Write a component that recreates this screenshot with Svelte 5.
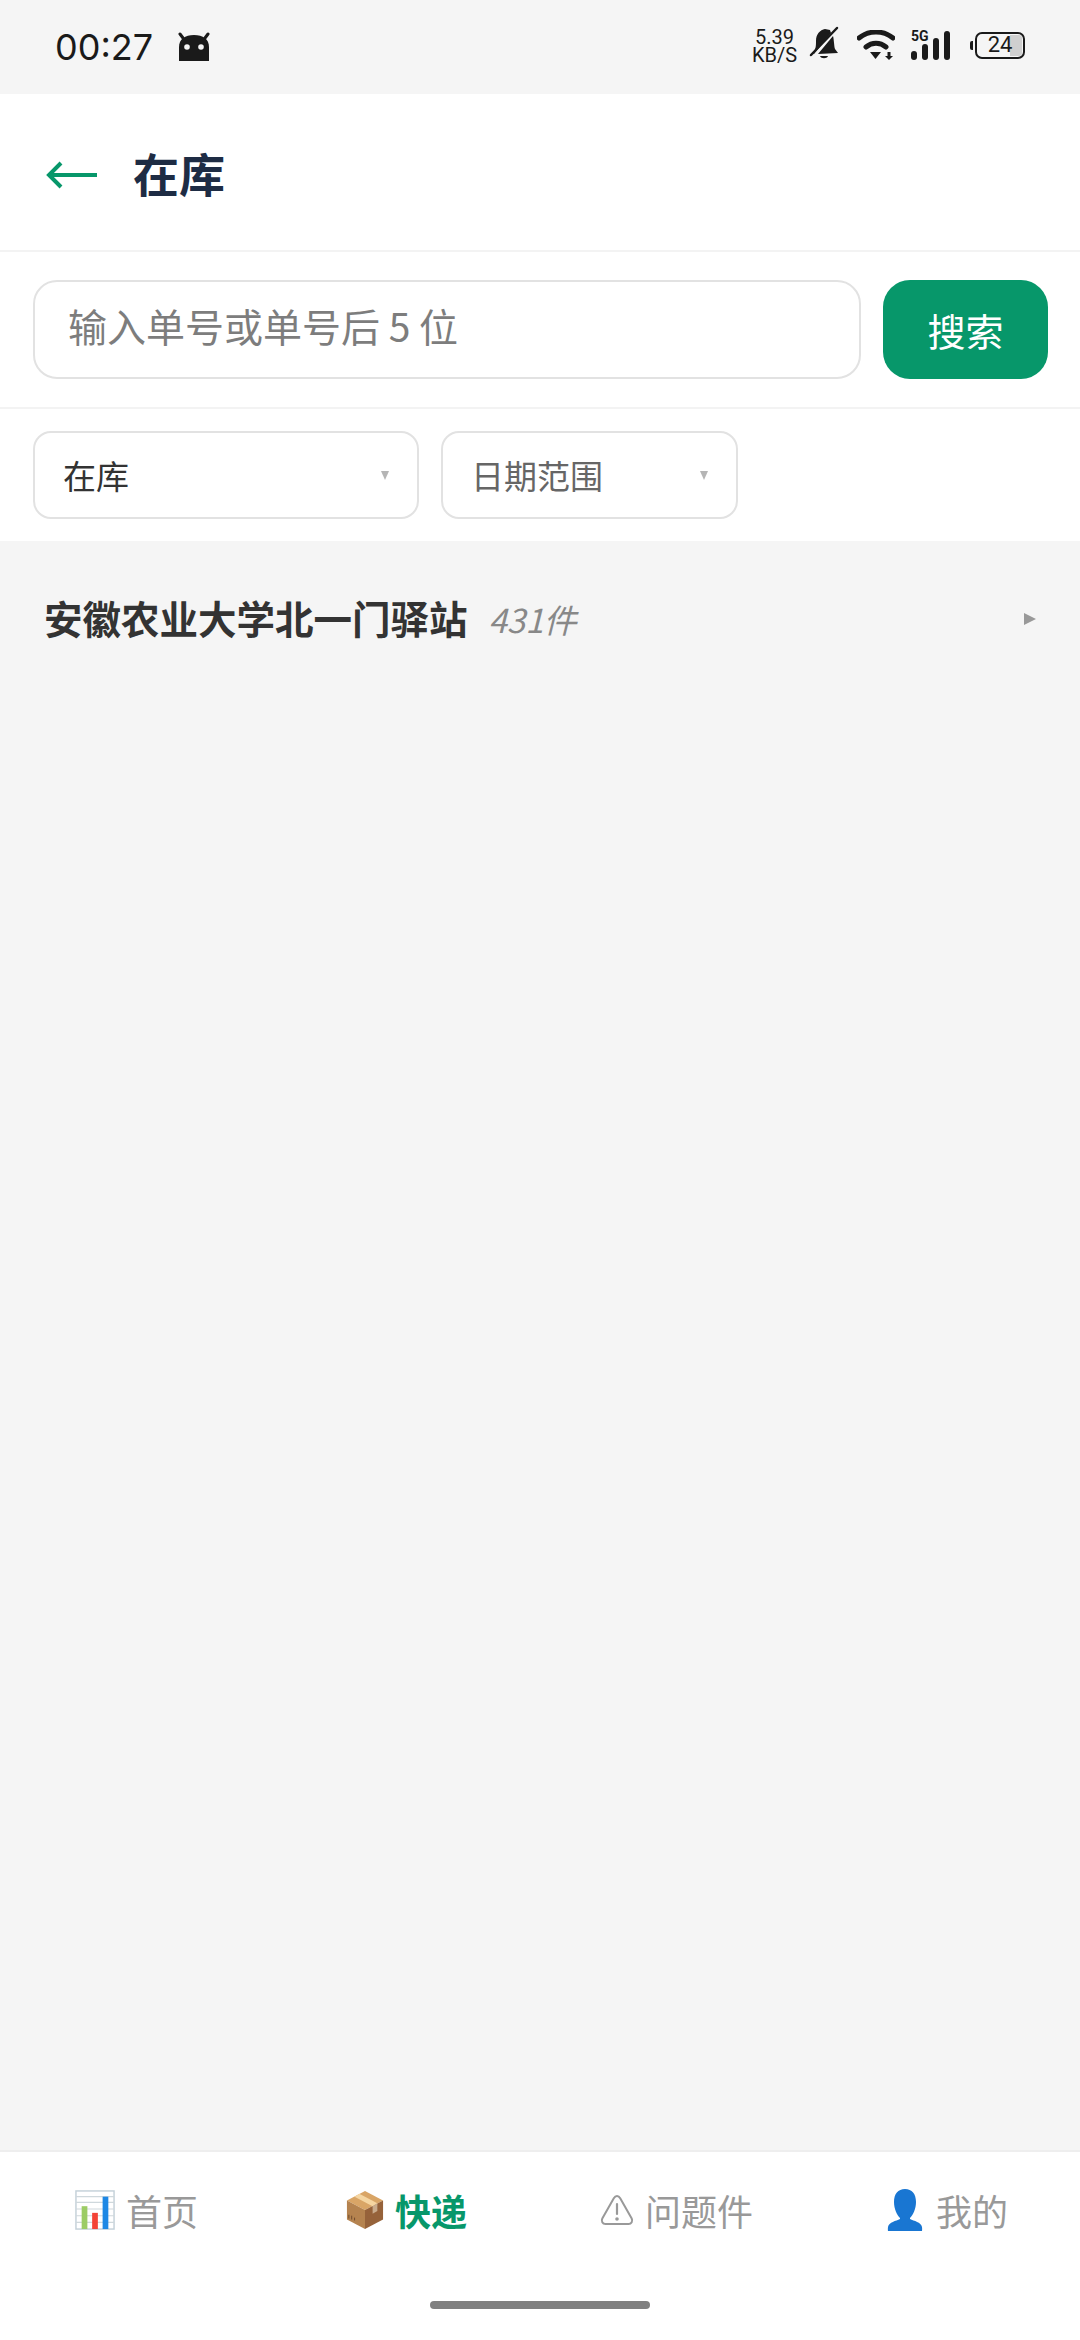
<script>
  let keyword = '';
  const filters = [
    { label: '在库', width: 386, active: true },
    { label: '日期范围', width: 297, active: false }
  ];
</script>

<div class="page">
  <div class="statusbar">
    <div class="status-left">
      <span class="time">00:27</span>
      <svg class="robot" width="32" height="30" viewBox="0 0 32 30">
        <path d="M1 29V15C1 7 7 3 16 3s15 4 15 12v14z" fill="#1a1a1a"/>
        <path d="M5 6L2 2M27 6l3-4" stroke="#1a1a1a" stroke-width="3" stroke-linecap="round"/>
        <circle cx="9" cy="15" r="2.800" fill="#f5f5f5"/>
        <circle cx="23" cy="15" r="2.800" fill="#f5f5f5"/>
      </svg>
    </div>
    <div class="status-right">
      <div class="speed"><span>5.39</span><span>KB/S</span></div>
      <svg class="bell" width="30" height="34" viewBox="0 0 30 34">
        <path d="M3 27C7 24 7 20 7 15 7 8 11 4 16 3l5 1 1 3L5 28z" fill="#1a1a1a"/>
        <path d="M24 10c1 3 1 10 2 13l3 4-20 1z" fill="#1a1a1a"/>
        <path d="M11 30h8c-1 3-7 3-8 0z" fill="#1a1a1a"/>
        <path d="M2 29L28 2" stroke="#1a1a1a" stroke-width="2.500" stroke-linecap="round"/>
      </svg>
      <svg class="wifi" width="38" height="30" viewBox="0 0 38 30">
        <path d="M2 8C12 0 26 0 36 8M9 17c6-5 14-5 20 0" fill="none" stroke="#1a1a1a" stroke-width="5" stroke-linecap="round"/>
        <path d="M13 22h11l-5.500 7z" fill="#1a1a1a"/>
        <path d="M32 22v5" stroke="#1a1a1a" stroke-width="3"/>
        <path d="M28 26h8l-4 4z" fill="#1a1a1a"/>
      </svg>
      <div class="signal">
        <span class="fiveg">5G</span>
        <svg width="40" height="30" viewBox="0 0 40 30">
          <rect x="0" y="21" width="6" height="9" rx="3" fill="#1a1a1a"/>
          <rect x="11" y="14" width="6" height="16" rx="3" fill="#1a1a1a"/>
          <rect x="22" y="8" width="6" height="22" rx="3" fill="#1a1a1a"/>
          <rect x="33" y="1" width="6" height="29" rx="3" fill="#1a1a1a"/>
        </svg>
      </div>
      <div class="battery">
        <span class="nub"></span>
        <div class="cell"><span class="fill"></span><span class="level">24</span></div>
      </div>
    </div>
  </div>

  <header class="header">
    <svg class="back" width="52" height="30" viewBox="0 0 52 30">
      <path d="M51 15H3M15 3L3 15l12 12" fill="none" stroke="#07976a" stroke-width="4"/>
    </svg>
    <h1>在库</h1>
  </header>

  <div class="search">
    <input class="search-input" bind:value={keyword} placeholder="输入单号或单号后 5 位" />
    <button class="search-btn">搜索</button>
  </div>

  <div class="filters">
    {#each filters as f}
      <div class="filter" class:active={f.active} style="width: {f.width}px">
        <span>{f.label}</span>
        <i class="caret"></i>
      </div>
    {/each}
  </div>

  <main class="content">
    <div class="station">
      <span class="name">安徽农业大学北一门驿站</span>
      <span class="count">431件</span>
      <i class="arrow"></i>
    </div>
  </main>

  <nav class="tabbar">
    <div class="tabs">
      <div class="tab">
        <svg width="40" height="40" viewBox="0 0 42 42">
          <rect x="1" y="1" width="40" height="40" fill="#fff" stroke="#c3d0d8" stroke-width="1.500"/>
          <path d="M1 7h40M1 13h40M1 20h40M1 27h40M1 34h40" stroke="#cfd8dc" stroke-width="1.200"/>
          <rect x="7" y="17" width="6" height="24" fill="#9ccc65"/>
          <rect x="18" y="24" width="6" height="17" fill="#f44336"/>
          <rect x="29" y="7" width="6" height="34" fill="#1e88e5"/>
        </svg>
        <span>首页</span>
      </div>
      <div class="tab current">
        <svg width="38" height="40" viewBox="0 0 40 42">
          <path d="M20 1l19 10-19 10L1 11z" fill="#d9a566"/>
          <path d="M1 11l19 10v20L1 31z" fill="#b5834f"/>
          <path d="M39 11L20 21v20l19-10z" fill="#96623a"/>
          <path d="M9 7l19 10 5-3L14 4z" fill="#f5d5a1"/>
          <path d="M28 17l5-3v8l-5 3z" fill="#c9ab8c"/>
          <path d="M3 26v4M6 27v4M9 29v3" stroke="#6d4a2d" stroke-width="1"/>
        </svg>
        <span>快递</span>
      </div>
      <div class="tab">
        <svg width="34" height="32" viewBox="0 0 34 32">
          <path d="M17 2c-1.500 0-2.500 1-3.200 2.200L2.300 24.500C1 27 2.500 30 5.500 30h23c3 0 4.500-3 3.200-5.500L20.200 4.200C19.500 3 18.500 2 17 2z" fill="none" stroke="#999" stroke-width="2"/>
          <path d="M17 10v10" stroke="#999" stroke-width="2.200" stroke-linecap="round"/>
          <circle cx="17" cy="25" r="1.800" fill="#999"/>
        </svg>
        <span>问题件</span>
      </div>
      <div class="tab">
        <svg width="40" height="42" viewBox="0 0 36 42">
          <path d="M18 0c7 0 11 5 11 13 0 7-3 13-6 16v1c4 2 11 3 12 8 .300 2 0 4 0 4H1s-.300-2 0-4c1-5 8-6 12-8v-1C10 26 7 20 7 13 7 5 11 0 18 0z" fill="#1976d2"/>
        </svg>
        <span>我的</span>
      </div>
    </div>
    <div class="home-bar"></div>
  </nav>
</div>

<style>
  :global(body) {
    margin: 0;
    background: #f5f5f5;
  }

  .page {
    width: 1080px;
    height: 2340px;
    display: flex;
    flex-direction: column;
    background: #f5f5f5;
    font-family: "Noto Sans CJK SC", "Noto Sans", sans-serif;
    overflow: hidden;
  }

  /* status bar */
  .statusbar {
    height: 94px;
    flex: none;
    display: flex;
    justify-content: space-between;
    align-items: center;
    padding: 0 55px 4px 55px;
    box-sizing: border-box;
    color: #1a1a1a;
  }

  .status-left {
    display: flex;
    align-items: center;
    gap: 25px;
    margin-top: 3px;
  }

  .time {
    font-family: Inter, Roboto, sans-serif;
    font-size: 36px;
    line-height: 44px;
  }

  .status-right {
    display: flex;
    align-items: center;
  }

  .speed {
    display: flex;
    flex-direction: column;
    align-items: center;
    font-family: Roboto, sans-serif;
    font-size: 20px;
    line-height: 17.500px;
    width: 43px;
    margin-top: 3px;
  }

  .bell {
    margin-left: 13px;
    margin-top: -4px;
  }

  .wifi {
    margin-left: 18px;
  }

  .signal {
    position: relative;
    margin-left: 16px;
    width: 40px;
    height: 30px;
  }

  .fiveg {
    position: absolute;
    left: 0;
    top: 0;
    font-family: Roboto, sans-serif;
    font-size: 14px;
    font-weight: 700;
    line-height: 13px;
  }

  .signal svg {
    display: block;
  }

  .battery {
    display: flex;
    align-items: center;
    margin-left: 19px;
    gap: 2px;
  }

  .nub {
    width: 3px;
    height: 9px;
    border-radius: 2px 0 0 2px;
    background: #1a1a1a;
  }

  .cell {
    position: relative;
    width: 50px;
    height: 27px;
    box-sizing: border-box;
    border: 2.500px solid #1a1a1a;
    border-radius: 7px;
    display: flex;
    align-items: center;
    justify-content: center;
  }

  .fill {
    position: absolute;
    right: 1px;
    top: 1px;
    bottom: 1px;
    width: 12px;
    background: #cfcfcf;
    border-radius: 0 3px 3px 0;
  }

  .level {
    position: relative;
    font-family: Roboto, sans-serif;
    font-size: 22px;
    line-height: 22px;
  }

  /* header */
  .header {
    height: 158px;
    flex: none;
    display: flex;
    align-items: center;
    gap: 35px;
    padding-left: 46px;
    box-sizing: border-box;
    background: #fff;
    border-bottom: 2px solid #f3f3f3;
  }

  .back {
    margin-top: 6px;
  }

  .header h1 {
    margin: 0;
    font-size: 46px;
    font-weight: 700;
    color: #1e2c44;
  }

  /* search */
  .search {
    height: 157px;
    flex: none;
    display: flex;
    align-items: center;
    gap: 22px;
    padding: 0 33px 1px;
    box-sizing: border-box;
    background: #fff;
    border-bottom: 2px solid #f3f3f3;
  }

  .search-input {
    flex: 1;
    min-width: 0;
    height: 99px;
    box-sizing: border-box;
    padding: 0 33px 8px;
    border: 2px solid #e2e2e2;
    border-radius: 24px;
    font-family: inherit;
    font-size: 39px;
    outline: none;
    background: #fff;
  }

  .search-input::placeholder {
    color: #7d7d7d;
  }

  .search-btn {
    width: 165px;
    height: 99px;
    margin-right: -1px;
    padding: 0;
    border: none;
    border-radius: 27px;
    background: #07976a;
    color: #fff;
    font-family: inherit;
    font-size: 38px;
  }

  /* filters */
  .filters {
    height: 132px;
    flex: none;
    display: flex;
    align-items: center;
    gap: 22px;
    padding: 0 33px;
    box-sizing: border-box;
    background: #fff;
  }

  .filter {
    height: 88px;
    box-sizing: border-box;
    display: flex;
    align-items: center;
    justify-content: space-between;
    padding: 0 28px;
    border: 2px solid #e2e2e2;
    border-radius: 18px;
    font-size: 33px;
    color: #666;
  }

  .filter.active {
    color: #333;
  }

  .caret {
    width: 0;
    height: 0;
    border-left: 4.500px solid transparent;
    border-right: 4.500px solid transparent;
    border-top: 9px solid #b5b5b5;
  }

  /* list */
  .content {
    flex: 1;
    padding: 47px 44px 0 44px;
  }

  .station {
    display: flex;
    align-items: center;
    height: 58px;
  }

  .name {
    font-size: 38.500px;
    font-weight: 700;
    color: #333;
  }

  .count {
    margin: 3px 0 0 21px;
    font-size: 33px;
    font-style: italic;
    color: #888;
  }

  .arrow {
    margin: 4px 0 0 auto;
    width: 0;
    height: 0;
    border-top: 6px solid transparent;
    border-bottom: 6px solid transparent;
    border-left: 12px solid #999;
  }

  /* bottom tabs */
  .tabbar {
    height: 190px;
    flex: none;
    box-sizing: border-box;
    background: #fff;
    border-top: 2px solid #eee;
    position: relative;
  }

  .tabs {
    display: grid;
    grid-template-columns: repeat(4, 1fr);
    height: 116px;
  }

  .tab {
    display: flex;
    align-items: center;
    justify-content: center;
    gap: 11px;
    padding-left: 3px;
    font-size: 36px;
    color: #999;
  }

  .tab.current {
    color: #07976a;
    font-weight: 700;
  }

  .home-bar {
    position: absolute;
    left: 430px;
    bottom: 31px;
    width: 220px;
    height: 8px;
    border-radius: 4px;
    background: #808080;
  }
</style>
